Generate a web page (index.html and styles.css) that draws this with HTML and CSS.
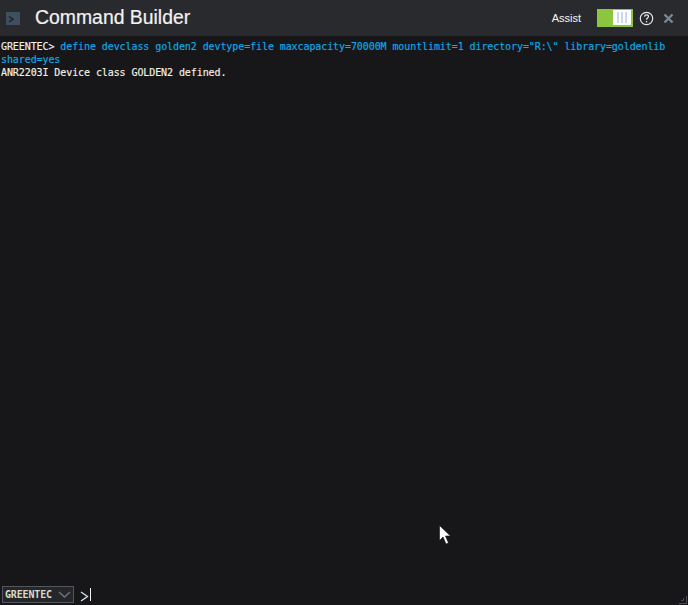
FILE: index.html
```html
<!DOCTYPE html>
<html lang="en">
<head>
<meta charset="utf-8">
<title>Command Builder</title>
<link rel="stylesheet" href="styles.css">
</head>
<body>
<div class="app">
  <header class="header">
    <svg class="term-icon" width="14" height="13" viewBox="0 0 14 13"><rect width="14" height="13" fill="#414e61"/><rect width="14" height="2" fill="#3a5453"/><path d="M3 4.500 7 7.200 3 10" fill="none" stroke="#1b2026" stroke-width="1.500"/></svg>
    <h1 class="title">Command Builder</h1>
    <div class="spacer"></div>
    <span class="assist">Assist</span>
    <div class="toggle"><div class="thumb"><i></i><i></i><i></i></div></div>
    <svg class="help" width="15" height="15" viewBox="0 0 15 15"><circle cx="7.500" cy="7.500" r="6.200" fill="none" stroke="#e8e8e8" stroke-width="1.200"/><path d="M5.500 5.800c.1-1.200 1-1.900 2-1.900 1.200 0 2 .8 2 1.700 0 1.400-2 1.500-2 3.100" fill="none" stroke="#e8e8e8" stroke-width="1.200"/><rect x="6.900" y="10" width="1.300" height="1.400" fill="#e8e8e8"/></svg>
    <svg class="close" width="11" height="11" viewBox="0 0 11 11"><path d="M1.500 1.500l8 8M9.500 1.500l-8 8" stroke="#7b8794" stroke-width="2.400"/></svg>
  </header>
  <main class="output">
    <div class="line"><span class="prompt">GREENTEC&gt;</span> <span class="cmd">define devclass golden2 devtype=file maxcapacity=70000M mountlimit=1 directory="R:\" library=goldenlib shared=yes</span></div>
    <div class="line result">ANR2203I Device class GOLDEN2 defined.</div>
  </main>
  <footer class="footer">
    <div class="server"><span>GREENTEC</span><svg width="13" height="7" viewBox="0 0 13 7"><path d="M1 1l5.500 5L12 1" fill="none" stroke="#6d7278" stroke-width="1.500"/></svg></div>
    <svg class="caret" width="9" height="11" viewBox="0 0 9 11"><path d="M1 1l6.500 4.500L1 10" fill="none" stroke="#cfeaf2" stroke-width="1.300"/></svg>
    <span class="cursor-bar"></span>
  </footer>
  <svg class="pointer" width="12" height="20" viewBox="0 0 12 20"><path d="M.5.5v15l3.500-3.500 3 7 2.500-1-3-7h5z" fill="#fff" stroke="#111" stroke-width=".6"/></svg>
  <svg class="resize" width="10" height="10" viewBox="0 0 10 10"><path d="M9.500 2v7.500H2M6.500 4v2.500H4" fill="none" stroke="#4a4f57"/></svg>
</div>
</body>
</html>
```
FILE: styles.css
```css
* { box-sizing: border-box; }
html, body { margin: 0; height: 100%; }
.app {
  position: relative;
  width: 688px;
  height: 605px;
  display: flex;
  flex-direction: column;
  background: #17171a;
  overflow: hidden;
}
.header {
  height: 36px;
  flex: none;
  display: flex;
  align-items: center;
  background: #292a2e;
  padding: 0 14px 0 6px;
}
.term-icon { flex: none; }
.title {
  margin: 0 0 0 15px;
  font: 400 19.4px/24px "Liberation Sans", Arial, sans-serif;
  color: #f2f2f2;
  -webkit-text-stroke: 0.2px #f2f2f2;
  position: relative;
  top: -1px;
}
.spacer { flex: 1; }
.assist {
  font: 400 11px/14px "Liberation Sans", Arial, sans-serif;
  color: #f4f4f4;
  margin-right: 16px;
}
.toggle {
  width: 36px;
  height: 18px;
  background: #8cc63f;
  display: flex;
  justify-content: flex-end;
  align-items: stretch;
  padding: 1px 2px 2px 0;
  margin-right: 6px;
}
.thumb {
  width: 18px;
  background: #fff;
  display: flex;
  justify-content: center;
  gap: 2px;
  padding: 2px 0;
}
.thumb i { width: 2px; background: #ccd6ec; }
.help { flex: none; margin-right: 9px; margin-top: 1px; }
.close { flex: none; margin-top: 1px; }
.output {
  flex: 1;
  padding: 4px 1px 0 1px;
  font: 400 10px/13px "DejaVu Sans Mono", monospace;
  letter-spacing: -0.09px;
  -webkit-text-stroke: 0.15px currentColor;
}
.prompt { color: #eef0f2; }
.cmd { color: #0eaaea; }
.result { color: #f6f2e4; }
.footer {
  height: 21px;
  flex: none;
  display: flex;
  align-items: center;
  padding: 1px 0 1px 2px;
}
.server {
  width: 72px;
  height: 17px;
  display: flex;
  align-items: center;
  gap: 6px;
  padding-left: 2px;
  border: 1px solid #54585e;
  background: #24262a;
  font: 700 10px/14px "DejaVu Sans Mono", monospace;
  letter-spacing: -0.15px;
  color: #d9dcc8;
}
.caret { margin-left: 6px; margin-top: 3px; }
.cursor-bar { width: 1px; height: 13px; background: #f0f0f0; margin-left: 1px; }
.pointer { position: absolute; left: 439px; top: 525px; }
.resize { position: absolute; right: 1px; bottom: 1px; }
```
